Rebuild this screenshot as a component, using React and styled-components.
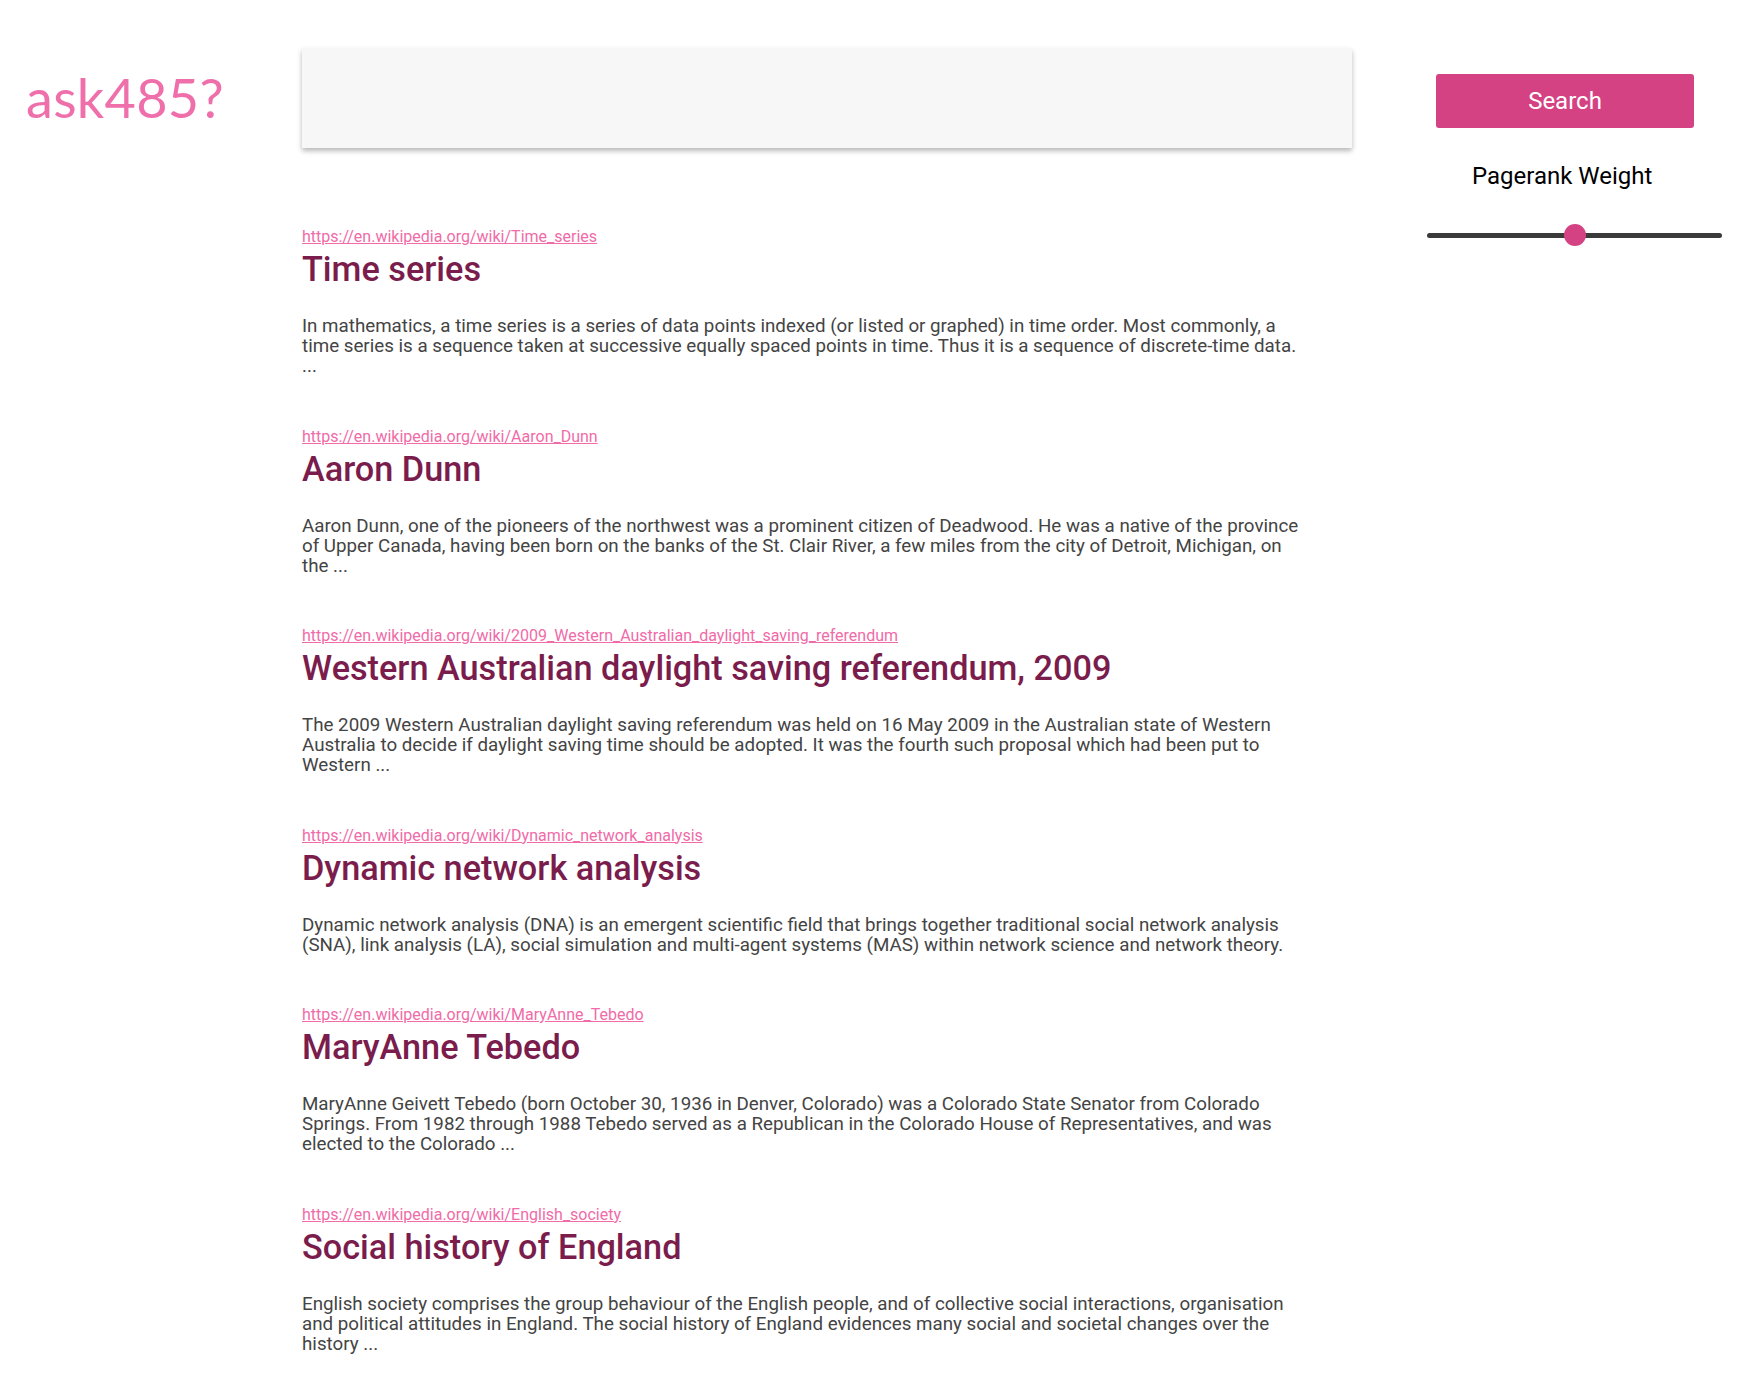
import React, { useState } from "react";
import styled, { createGlobalStyle } from "styled-components";

const GlobalStyle = createGlobalStyle`
  html, body { margin: 0; padding: 0; background: #ffffff; }
  body { font-family: Roboto, "Liberation Sans", Arial, sans-serif; }
  * { box-sizing: border-box; }
`;

const Page = styled.div`
  display: grid;
  grid-template-columns: 302px 1050px 75px 295px;
  grid-template-rows: 148px auto;
  padding-bottom: 40px;
`;

const Logo = styled.div`
  grid-column: 1;
  grid-row: 1;
  padding: 68px 0 0 26px;
  font-family: Lato, "Open Sans", sans-serif;
  font-weight: 400;
  font-size: 54px;
  line-height: 60px;
  color: #ef6fab;
  letter-spacing: 0.3px;
`;

const SearchInput = styled.input`
  grid-column: 2;
  grid-row: 1;
  margin-top: 48px;
  height: 100px;
  width: 100%;
  border: none;
  outline: none;
  background: #f7f7f7;
  box-shadow: 0 3px 5px rgba(0, 0, 0, 0.28);
  font-family: Roboto, sans-serif;
  font-size: 28px;
  padding: 0 24px;
  color: #333;
`;

const Sidebar = styled.aside`
  grid-column: 4;
  grid-row: 1 / 3;
  display: flex;
  flex-direction: column;
  align-items: flex-start;
  padding-top: 74px;
`;

const SearchButton = styled.button`
  margin-left: 9px;
  width: 258px;
  height: 54px;
  border: none;
  border-radius: 3px;
  background: #d44283;
  color: #ffffff;
  font-family: Roboto, sans-serif;
  font-size: 24px;
  cursor: pointer;
`;

const SliderLabel = styled.div`
  margin-top: 34px;
  padding-left: 45px;
  font-family: Roboto, sans-serif;
  font-size: 24px;
  line-height: 28px;
  color: #000000;
`;

const Slider = styled.input.attrs({ type: "range" })`
  -webkit-appearance: none;
  appearance: none;
  width: 295px;
  height: 24px;
  margin: 33px 0 0 0;
  background: transparent;
  outline: none;

  &::-webkit-slider-runnable-track {
    height: 5px;
    border-radius: 3px;
    background: #3a3a3a;
  }
  &::-webkit-slider-thumb {
    -webkit-appearance: none;
    width: 22px;
    height: 22px;
    border-radius: 50%;
    background: #d44283;
    margin-top: -8.5px;
    border: none;
  }
`;

const Results = styled.main`
  grid-column: 2;
  grid-row: 2;
  width: 1000px;
  padding-top: 77px;
  display: flex;
  flex-direction: column;
  gap: 48.5px;
`;

const Result = styled.article`
  display: flex;
  flex-direction: column;
`;

const ResultUrl = styled.a`
  align-self: flex-start;
  font-size: 16px;
  line-height: 24px;
  color: #f06ba8;
  text-decoration: underline;
`;

const ResultTitle = styled.h2`
  margin: 1px 0 0 0;
  font-size: 34.25px;
  font-weight: 500;
  line-height: 38px;
  color: #7a1c4c;
`;

const ResultText = styled.p`
  margin: 28px 0 0 0;
  font-size: 18.75px;
  line-height: 20px;
  color: #444444;
`;

const results = [
  {
    url: "https://en.wikipedia.org/wiki/Time_series",
    title: "Time series",
    text: "In mathematics, a time series is a series of data points indexed (or listed or graphed) in time order. Most commonly, a time series is a sequence taken at successive equally spaced points in time. Thus it is a sequence of discrete-time data. ...",
  },
  {
    url: "https://en.wikipedia.org/wiki/Aaron_Dunn",
    title: "Aaron Dunn",
    text: "Aaron Dunn, one of the pioneers of the northwest was a prominent citizen of Deadwood. He was a native of the province of Upper Canada, having been born on the banks of the St. Clair River, a few miles from the city of Detroit, Michigan, on the ...",
  },
  {
    url: "https://en.wikipedia.org/wiki/2009_Western_Australian_daylight_saving_referendum",
    title: "Western Australian daylight saving referendum, 2009",
    text: "The 2009 Western Australian daylight saving referendum was held on 16 May 2009 in the Australian state of Western Australia to decide if daylight saving time should be adopted. It was the fourth such proposal which had been put to Western ...",
  },
  {
    url: "https://en.wikipedia.org/wiki/Dynamic_network_analysis",
    title: "Dynamic network analysis",
    text: "Dynamic network analysis (DNA) is an emergent scientific field that brings together traditional social network analysis (SNA), link analysis (LA), social simulation and multi-agent systems (MAS) within network science and network theory.",
  },
  {
    url: "https://en.wikipedia.org/wiki/MaryAnne_Tebedo",
    title: "MaryAnne Tebedo",
    text: "MaryAnne Geivett Tebedo (born October 30, 1936 in Denver, Colorado) was a Colorado State Senator from Colorado Springs. From 1982 through 1988 Tebedo served as a Republican in the Colorado House of Representatives, and was elected to the Colorado ...",
  },
  {
    url: "https://en.wikipedia.org/wiki/English_society",
    title: "Social history of England",
    text: "English society comprises the group behaviour of the English people, and of collective social interactions, organisation and political attitudes in England. The social history of England evidences many social and societal changes over the history ...",
  },
];

export default function App() {
  const [weight, setWeight] = useState(50);
  const [query, setQuery] = useState("");
  return (
    <>
      <GlobalStyle />
      <Page>
        <Logo>ask485?</Logo>
        <SearchInput value={query} onChange={(e) => setQuery(e.target.value)} />
        <Sidebar>
          <SearchButton>Search</SearchButton>
          <SliderLabel>Pagerank Weight</SliderLabel>
          <Slider min={0} max={100} value={weight} onChange={(e) => setWeight(Number(e.target.value))} />
        </Sidebar>
        <Results>
          {results.map((r) => (
            <Result key={r.url}>
              <ResultUrl href={r.url}>{r.url}</ResultUrl>
              <ResultTitle>{r.title}</ResultTitle>
              <ResultText>{r.text}</ResultText>
            </Result>
          ))}
        </Results>
      </Page>
    </>
  );
}
